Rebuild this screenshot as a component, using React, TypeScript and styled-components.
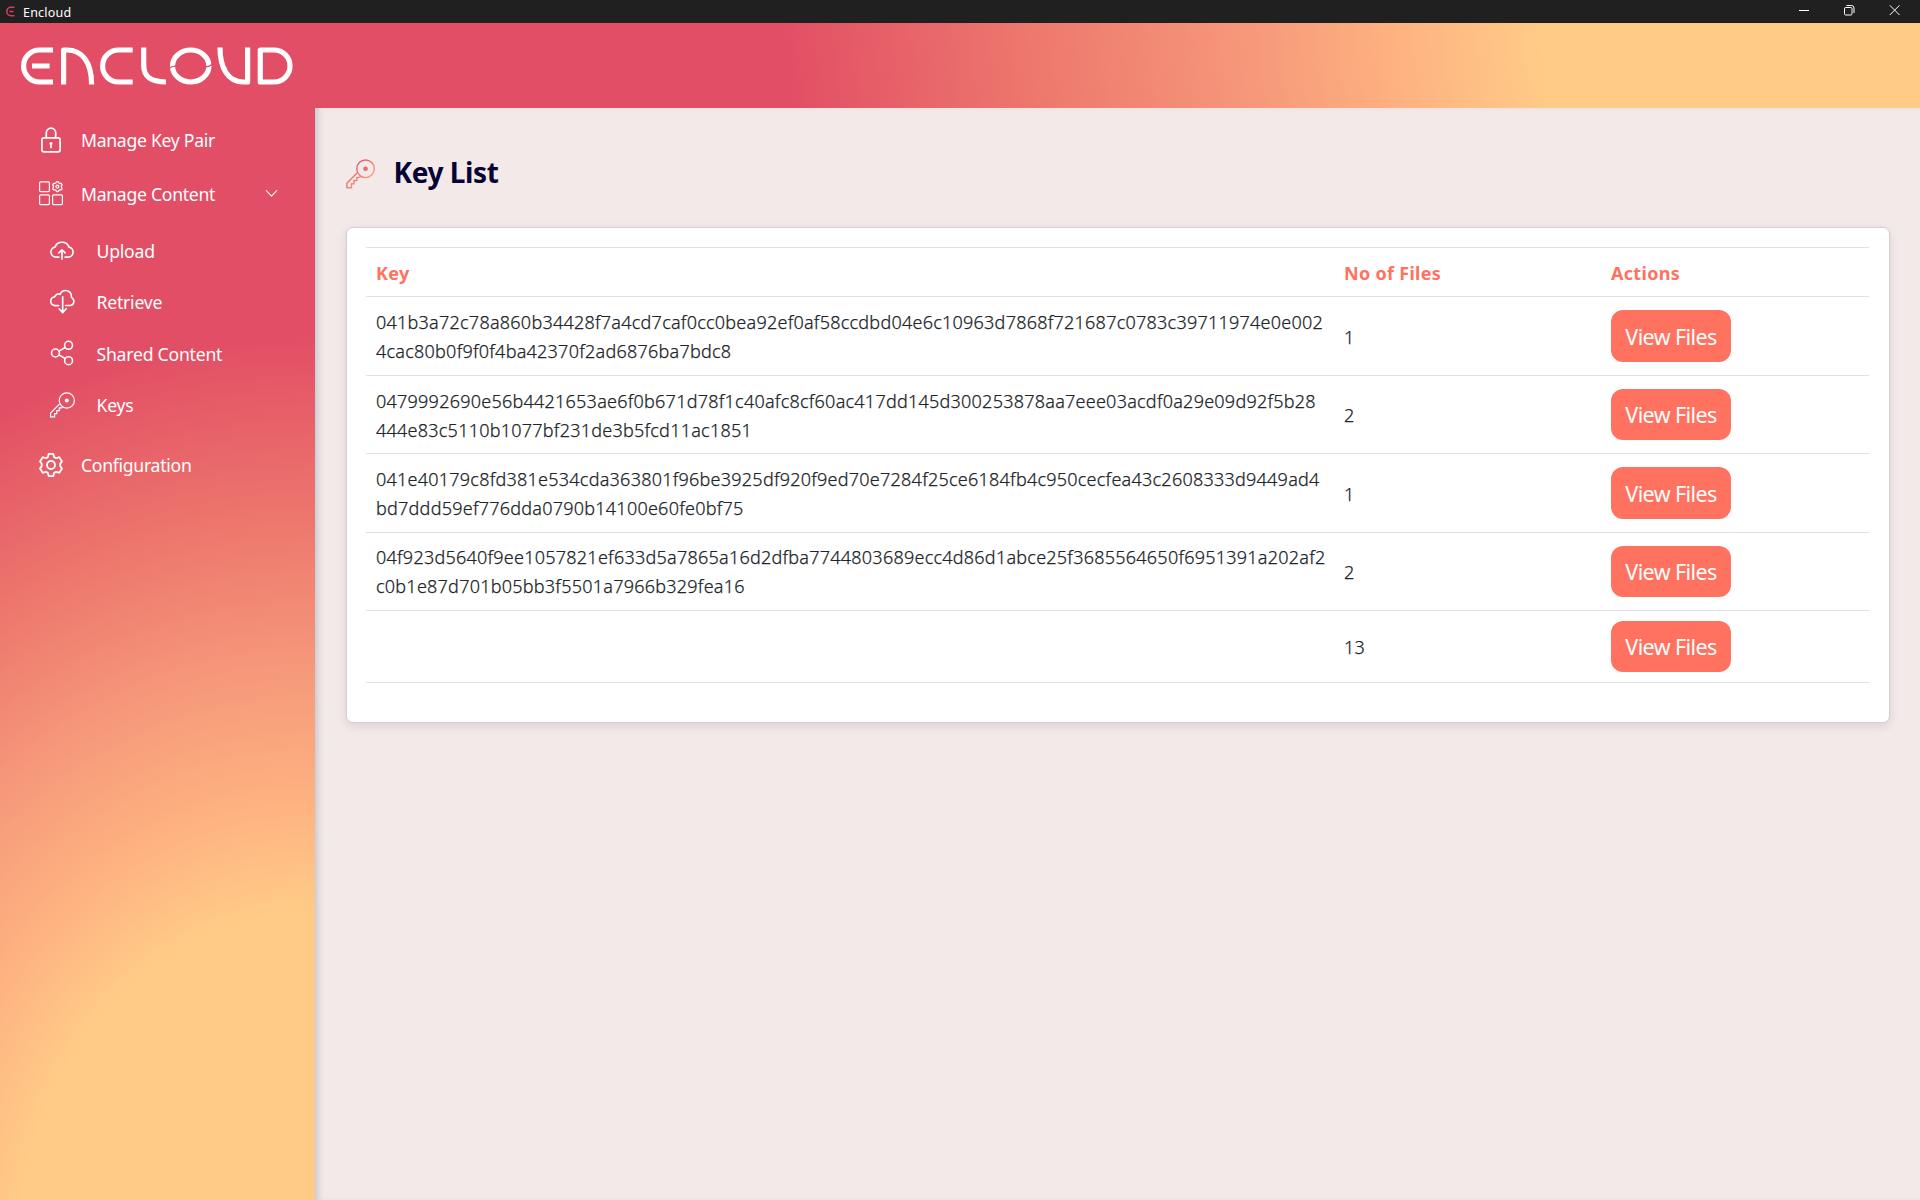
import React from 'react';
import styled, { createGlobalStyle } from 'styled-components';

const GlobalStyle = createGlobalStyle`
  * { box-sizing: border-box; }
  html, body { margin: 0; padding: 0; overflow: hidden; }
  body { font-family: "Noto Sans", "Open Sans", sans-serif; }
`;

const Window = styled.div`
  display: flex;
  flex-direction: column;
  width: 1920px;
  height: 1200px;
  background: #f3e9e8;
`;

const TitleBar = styled.div`
  display: flex;
  align-items: center;
  flex: none;
  height: 23px;
  padding: 0 20px 0 6px;
  background: #202020;
`;

const AppName = styled.span`
  flex: 1;
  margin-left: 8px;
  color: #fff;
  font-size: 12.5px;
  line-height: 22px;
  padding-top: 2px;
  letter-spacing: 0.2px;
`;

const WindowControls = styled.div`
  display: flex;
  align-items: center;
  align-self: flex-start;
  gap: 34px;
  height: 21px;
`;

const Header = styled.header`
  display: flex;
  flex: none;
  height: 85px;
  padding: 21px 18px;
  background: linear-gradient(83deg, #e24e65 40.8%, #ed776d 53.5%, #f6987a 65%, #feb381 73%, #ffcb87 80.3%);
`;

const Body = styled.div`
  display: flex;
  flex: 1;
  min-height: 0;
`;

const Sidebar = styled.nav`
  display: flex;
  flex-direction: column;
  flex: none;
  width: 315px;
  padding-top: 5px;
  background: radial-gradient(796px 926px at 315px 1152px, #ffcb87 37.6%, #feb381 49%, #f6987a 64%, #ed776d 80%, #e24e65 100%);
`;

const NavItem = styled.a`
  display: flex;
  align-items: center;
  flex: none;
  height: 53.5px;
  padding-left: 38px;
  color: #fff;
`;

const NavIcon = styled.span`
  display: flex;
  flex: none;
  width: 26px;
  height: 26px;
`;

const NavLabel = styled.span`
  flex: 1;
  margin-left: 17px;
  padding-top: 1px;
  font-size: 17.6px;
  line-height: 26px;
  white-space: nowrap;
  letter-spacing: -0.28px;
`;

const Chevron = styled.span`
  display: flex;
  margin-right: 37px;
`;

const SubMenu = styled.div`
  display: flex;
  flex-direction: column;
  padding: 5px 0 8px;
`;

const SubItem = styled(NavItem)`
  height: 51.3px;
  padding-left: 49px;
  ${NavLabel} { margin-left: 21.5px; letter-spacing: -0.22px; }
`;

const Main = styled.main`
  display: flex;
  flex-direction: column;
  flex: 1;
  padding: 45px 30px 0 31px;
  box-shadow: inset 6px 0 6px -3px rgba(150, 160, 185, 0.45);
`;

const PageTitle = styled.div`
  display: flex;
  align-items: center;
  height: 41px;
  margin-left: -1px;
`;

const Heading = styled.h1`
  margin: 0 0 2px 18.5px;
  color: #060433;
  font-size: 28px;
  font-weight: 700;
  line-height: 39px;
  letter-spacing: -0.42px;
`;

const Card = styled.section`
  height: 496px;
  margin-top: 33px;
  padding: 19px 20px 0 19px;
  background: #fff;
  border: 1px solid #d0cfd2;
  border-radius: 7px;
  box-shadow: 0 3px 8px rgba(80, 70, 110, 0.14);
`;

const Row = styled.div<{ $height: number }>`
  display: grid;
  grid-template-columns: 968px 267px 1fr;
  align-items: center;
  height: ${p => p.$height}px;
  border-bottom: 1px solid #dee2e6;
  color: #212529;
  font-size: 18px;
  font-weight: 300;
`;

const Cell = styled.div`
  padding: 2px 0 0 10px;
  line-height: 29px;
  white-space: nowrap;
  letter-spacing: 0.245px;
  -webkit-text-stroke: 0.25px currentColor;
`;

const KeyText = styled.div<{ $lift?: number }>`
  margin: ${p => -(p.$lift ?? 0)}px 0 ${p => p.$lift ?? 0}px;
`;

const HeadRow = styled(Row)`
  border-top: 1px solid #dee2e6;
  color: #ff7260;
  font-weight: 700;
  ${Cell} { letter-spacing: 0.3px; -webkit-text-stroke: 0; }
`;

const ActionCell = styled.div`
  display: flex;
  padding-left: 10px;
`;

const ViewButton = styled.button<{ $height: number }>`
  display: flex;
  align-items: center;
  justify-content: center;
  width: 120px;
  height: ${p => p.$height}px;
  padding: 1px 0 0;
  border: 0;
  border-radius: 12px;
  background: #ff7260;
  color: #fff;
  font: 400 21.5px/30px "Noto Sans", sans-serif;
  letter-spacing: -0.6px;
`;

const stroke = { fill: 'none', stroke: 'currentColor', strokeLinecap: 'round', strokeLinejoin: 'round' } as const;

const Logo = () => (
  <svg width="280" height="44" viewBox="18 44 280 44" fill="none" stroke="#fff" strokeWidth="5.2" strokeLinejoin="round">
    <path d="M53 50H39.6a16 16 0 0 0 0 32H53M32 66h17.6" />
    <path d="M63.6 84.5V50H67c15 0 24.6 12 24.6 34.5" />
    <path d="M132.700 50H118.600a16 16 0 0 0 0 32h14.100" />
    <path d="M143.700 47.500V65c0 11 6 17 22.300 17" />
    <ellipse cx="190.700" cy="66" rx="18.200" ry="16" />
    <path d="M220 47.500C220 68 228 82 243 82h4.600V47.500" />
    <path d="M260.300 50H274a16 16 0 0 1 0 32h-13.700z" />
    <path d="M169 68.500c2-2 4-2.500 7-2.300M205.500 66.800c3 0 5-.8 7-2.800" stroke="#e24e65" strokeWidth="1.200" />
  </svg>
);

const AppMark = () => (
  <svg width="9" height="11" viewBox="0 0 9 11" fill="none" stroke="#c9415f" strokeWidth="1.600">
    <path d="M8.500 1.300H5a4.200 4.200 0 0 0 0 8.400h3.500M3.300 5.500h4.200" />
  </svg>
);

const LockIcon = () => (
  <svg width="26" height="26" viewBox="0 0 26 26" {...stroke} strokeWidth="1.700">
    <rect x="3.900" y="10.800" width="18.200" height="14" rx="2" />
    <path d="M8.300 10.500V5.800a4.700 4.700 0 0 1 9.400 0v4.700M13 17.500v3" />
    <circle cx="13" cy="16.500" r="1.500" fill="currentColor" stroke="none" />
  </svg>
);

const gear = (cx: number, cy: number, r: number, depth: number, teeth: number) => {
  const points: string[] = [];
  for (let i = 0; i < 72; i++) {
    const a = (i / 72) * Math.PI * 2 - Math.PI / 2;
    const wave = Math.max(-1, Math.min(1, 1.7 * Math.cos(teeth * (a + Math.PI / 2))));
    const d = r + depth * wave;
    points.push(`${(cx + d * Math.cos(a)).toFixed(2)} ${(cy + d * Math.sin(a)).toFixed(2)}`);
  }
  return `M${points.join('L')}Z`;
};

const ContentIcon = () => (
  <svg width="26" height="26" viewBox="0 0 26 26" {...stroke} strokeWidth="1.200">
    <rect x="1.600" y="1.800" width="9.800" height="9.800" rx="1" />
    <rect x="1.600" y="14.800" width="9.800" height="9.800" rx="1" />
    <rect x="14.600" y="14.800" width="9.800" height="9.800" rx="1" />
    <path d={gear(19.4, 6.6, 4.5, 0.5, 6)} strokeWidth="1.300" />
    <circle cx="19.400" cy="6.600" r="1.500" />
  </svg>
);

const UploadIcon = () => (
  <svg width="27" height="26" viewBox="0 0 27 26" {...stroke} strokeWidth="1.700">
    <path d="M10.300 19.300H7.200a5.200 5.200 0 0 1-1-10.300A7.800 7.800 0 0 1 20.800 9a5.200 5.200 0 0 1-.8 10.300h-3.300" />
    <path d="M13.500 21.500v-9M10.300 15l3.200-3.300 3.200 3.300" />
  </svg>
);

const RetrieveIcon = () => (
  <svg width="27" height="26" viewBox="0 0 27 26" {...stroke} strokeWidth="1.700">
    <path d="M10 16.700H6.200C3.600 16.500 1.800 14.800 1.800 12.300c0-2.400 1.700-4.300 4-4.700C7.500 5 10 4.300 11.500 5c1-2.500 3.300-4 5.700-4 3.700 0 6.500 2.900 6.200 7.200 1.600 1 2.400 2.400 2.400 4.100 0 2.600-1.800 4.300-4.300 4.300h-4.300" />
    <path d="M14.200 7.500v15.500M10.500 20l3.700 4 3.700-4" />
  </svg>
);

const ShareIcon = () => (
  <svg width="27" height="26" viewBox="0 0 27 26" {...stroke} strokeWidth="1.600">
    <circle cx="20.300" cy="5" r="4.100" />
    <circle cx="20.300" cy="21" r="4.100" />
    <circle cx="6.700" cy="13" r="4.100" />
    <path d="M10.300 11l6.500-3.700M10.300 15l6.500 3.700" />
  </svg>
);

const KeyIcon = ({ size = 26, gradient = false }: { size?: number; gradient?: boolean }) => (
  <svg width={size} height={size} viewBox="0 0 26 26" {...stroke} stroke={gradient ? 'url(#keyGradient)' : '#fff'} strokeWidth="1.200" strokeLinejoin="miter">
    {gradient && (
      <defs>
        <linearGradient id="keyGradient" gradientUnits="userSpaceOnUse" x1="9" y1="4" x2="22" y2="18">
          <stop offset="0" stopColor="#e2556a" />
          <stop offset="1" stopColor="#fba478" />
        </linearGradient>
      </defs>
    )}
    <circle cx="17.800" cy="8.500" r="7.600" />
    <circle cx="17.800" cy="8.500" r="2" fill={gradient ? '#ee6a68' : '#fff'} stroke="none" />
    <path d="M10.200 12.400L1.600 21v3.900h4v-3.300h2.200v-3h2.500v-2.700h2.400l.7-.8" />
  </svg>
);

const GearIcon = () => (
  <svg width="26" height="26" viewBox="0 0 26 26" {...stroke} strokeWidth="1.800">
    <path d="M10.700 1.900h4.600l.8 3.200 2.200 1.100 3-1 2.700 4.200-1.700 2.200v2.800l1.700 2.200-2.700 4.200-3-1-2.200 1.100-.8 3.200h-4.600l-.8-3.200-2.200-1.100-3 1L2 16.600l1.700-2.200v-2.800L2 9.400l2.700-4.200 3 1 2.200-1.100z" />
    <circle cx="13" cy="13" r="4" />
  </svg>
);

const ChevronIcon = () => (
  <svg width="13" height="9" viewBox="0 0 13 9" {...stroke} strokeWidth="1.100">
    <path d="M1.200 1.500l5.300 5.700 5.300-5.700" />
  </svg>
);

const MinimizeIcon = () => (
  <svg width="11" height="11" viewBox="0 0 11 11" stroke="#fff"><path d="M0 5.500h10" /></svg>
);

const RestoreIcon = () => (
  <svg width="11" height="11" viewBox="0 0 11 11" fill="none" stroke="#fff">
    <rect x=".5" y="2.500" width="7.500" height="7.500" rx="1.200" />
    <path d="M2.500.500h5a2.500 2.500 0 0 1 2.500 2.500v5" />
  </svg>
);

const CloseIcon = () => (
  <svg width="11" height="11" viewBox="0 0 11 11" stroke="#fff"><path d="M.8.300l9.700 9.700M10.500.300l-9.700 9.700" /></svg>
);

const rows = [
  {
    height: 79, buttonHeight: 52, count: '1',
    lines: ['041b3a72c78a860b34428f7a4cd7caf0cc0bea92ef0af58ccdbd04e6c10963d7868f721687c0783c39711974e0e002', '4cac80b0f9f0f4ba42370f2ad6876ba7bdc8'],
  },
  {
    height: 78, buttonHeight: 51, count: '2',
    lines: ['0479992690e56b4421653ae6f0b671d78f1c40afc8cf60ac417dd145d300253878aa7eee03acdf0a29e09d92f5b28', '444e83c5110b1077bf231de3b5fcd11ac1851'],
  },
  {
    height: 79, buttonHeight: 52, count: '1',
    lines: ['041e40179c8fd381e534cda363801f96be3925df920f9ed70e7284f25ce6184fb4c950cecfea43c2608333d9449ad4', 'bd7ddd59ef776dda0790b14100e60fe0bf75'],
  },
  {
    height: 78, buttonHeight: 51, count: '2', lift: 1,
    lines: ['04f923d5640f9ee1057821ef633d5a7865a16d2dfba7744803689ecc4d86d1abce25f3685564650f6951391a202af2', 'c0b1e87d701b05bb3f5501a7966b329fea16'],
  },
  { height: 72, buttonHeight: 51, count: '13', lines: [] },
];

export default function App() {
  return (
    <Window>
      <GlobalStyle />
      <TitleBar>
        <AppMark />
        <AppName>Encloud</AppName>
        <WindowControls>
          <MinimizeIcon />
          <RestoreIcon />
          <CloseIcon />
        </WindowControls>
      </TitleBar>
      <Header><Logo /></Header>
      <Body>
        <Sidebar>
          <NavItem><NavIcon><LockIcon /></NavIcon><NavLabel>Manage Key Pair</NavLabel></NavItem>
          <NavItem>
            <NavIcon><ContentIcon /></NavIcon>
            <NavLabel>Manage Content</NavLabel>
            <Chevron><ChevronIcon /></Chevron>
          </NavItem>
          <SubMenu>
            <SubItem><NavIcon><UploadIcon /></NavIcon><NavLabel>Upload</NavLabel></SubItem>
            <SubItem><NavIcon><RetrieveIcon /></NavIcon><NavLabel>Retrieve</NavLabel></SubItem>
            <SubItem><NavIcon><ShareIcon /></NavIcon><NavLabel>Shared Content</NavLabel></SubItem>
            <SubItem><NavIcon><KeyIcon /></NavIcon><NavLabel>Keys</NavLabel></SubItem>
          </SubMenu>
          <NavItem><NavIcon><GearIcon /></NavIcon><NavLabel>Configuration</NavLabel></NavItem>
        </Sidebar>
        <Main>
          <PageTitle>
            <KeyIcon size={30} gradient />
            <Heading>Key List</Heading>
          </PageTitle>
          <Card>
            <HeadRow $height={50}>
              <Cell>Key</Cell>
              <Cell>No of Files</Cell>
              <Cell>Actions</Cell>
            </HeadRow>
            {rows.map((row, i) => (
              <Row key={i} $height={row.height}>
                <Cell>
                  <KeyText $lift={row.lift}>
                    {row.lines.map(line => <div key={line}>{line}</div>)}
                  </KeyText>
                </Cell>
                <Cell>{row.count}</Cell>
                <ActionCell><ViewButton $height={row.buttonHeight}>View Files</ViewButton></ActionCell>
              </Row>
            ))}
          </Card>
        </Main>
      </Body>
    </Window>
  );
}
